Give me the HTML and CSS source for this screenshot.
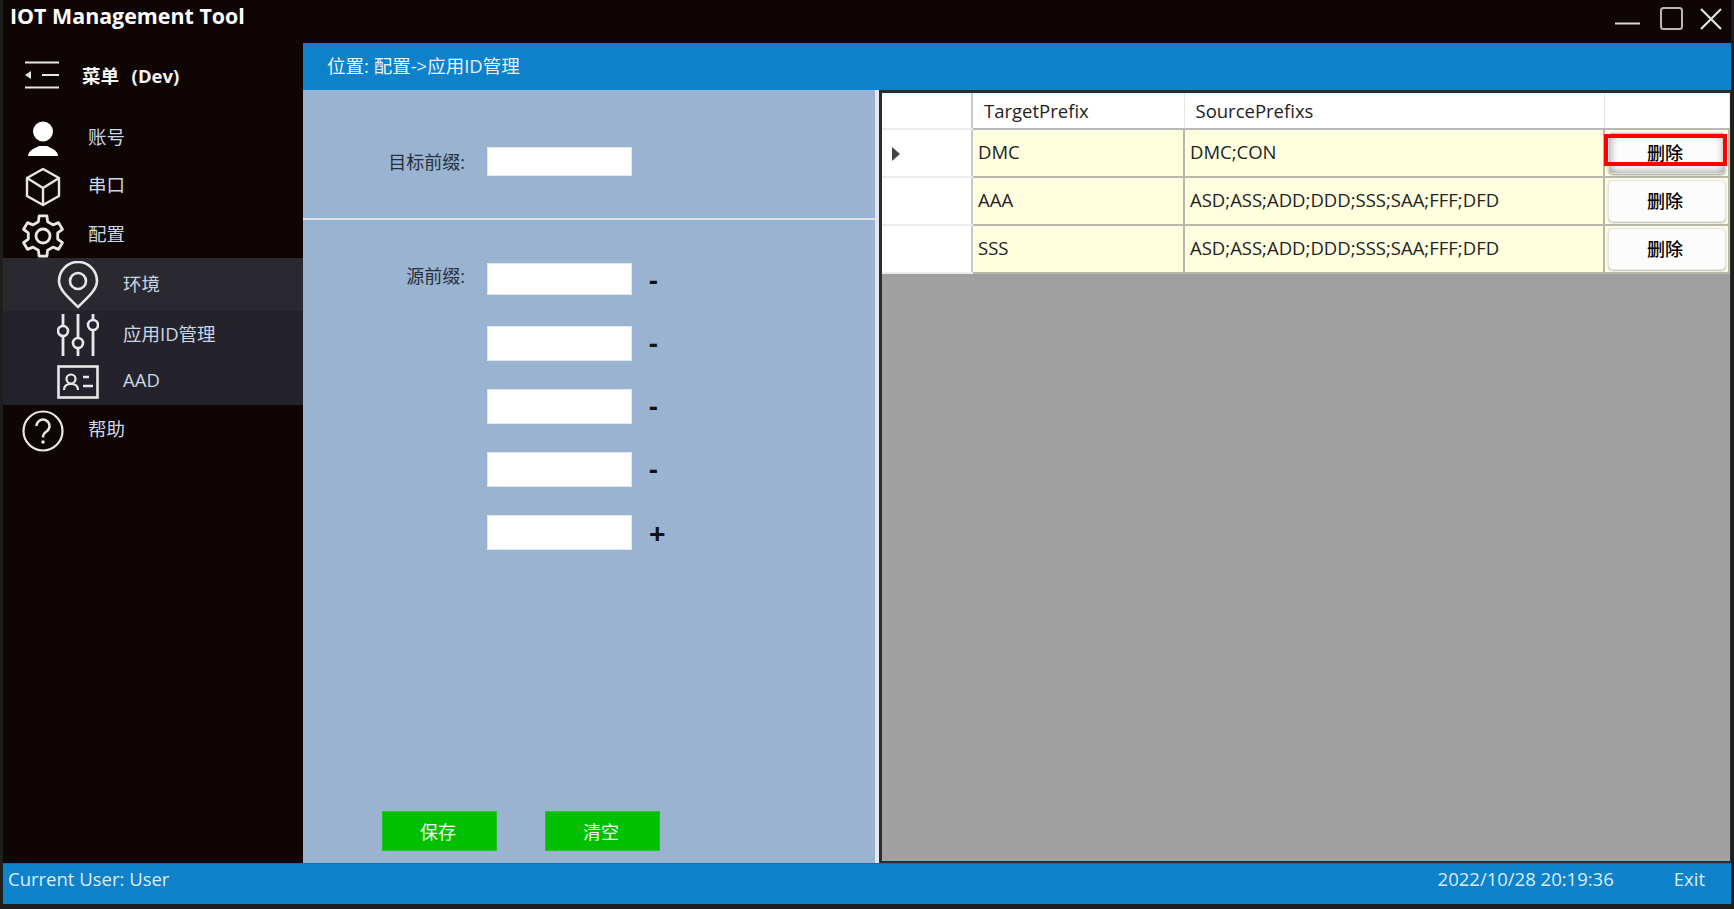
FILE: index.html

```html
<!DOCTYPE html>
<html lang="zh-CN">
<head>
    <meta charset="UTF-8">
    <title>IOT Management Tool</title>
    <link rel="stylesheet" href="styles.css">
</head>
<body>
    <div class="app">
        <div class="titlebar">
            <span class="app-title">IOT Management Tool</span>
            <div class="win-buttons">
                <svg class="win-min" width="26" height="26" viewBox="0 0 26 26"><path d="M0 17.500h25" stroke="#d8d8d8" stroke-width="2"/></svg>
                <svg width="24" height="24" viewBox="0 0 24 24"><rect x="1" y="1" width="21" height="21" rx="2.500" fill="none" stroke="#b8b8b8" stroke-width="2"/></svg>
                <svg width="22" height="22" viewBox="0 0 22 22"><path d="M1 1l20 20M21 1L1 21" stroke="#e4e4e4" stroke-width="2.200"/></svg>
            </div>
        </div>

        <div class="main">
            <div class="sidebar">
                <div class="menu-head">
                    <svg width="36" height="28" viewBox="0 0 36 28"><path d="M1 1.500h34M1 26.500h34M18 14h17" stroke="#e8e8e8" stroke-width="2"/><path d="M7 10v8l-6-4z" fill="#e8e8e8"/></svg>
                    <span>菜单&nbsp;&nbsp;(Dev)</span>
                </div>
                <div class="nav-item">
                    <div class="nav-icon">
                        <svg width="32" height="36" viewBox="0 0 32 36"><circle cx="16" cy="10.500" r="10" fill="#fff"/><path d="M1 35c0-3 2-5 5-7l6-3h8l6 3c3 2 5 4 5 7z" fill="#fff"/></svg>
                    </div>
                    <span>账号</span>
                </div>
                <div class="nav-item">
                    <div class="nav-icon">
                        <svg width="38" height="40" viewBox="0 0 38 40"><path d="M19 2l16 9v18l-16 9-16-9V11zM3 11l16 10 16-10M19 21v17" fill="none" stroke="#e8e8e8" stroke-width="2.400" stroke-linejoin="round"/></svg>
                    </div>
                    <span>串口</span>
                </div>
                <div class="nav-item nav-config">
                    <div class="nav-icon">
                        <svg width="42" height="44" viewBox="0 0 42 44"><path d="M16.400 7.700L17.100 1.900H24.900L25.600 7.700L31 10.900L36.500 8.600L40.400 15.300L35.700 18.900V25.100L40.400 28.700L36.500 35.400L31 33.100L25.600 36.300L24.900 42.100H17.100L16.400 36.300L11 33.100L5.500 35.400L1.600 28.700L6.300 25.100V18.900L1.600 15.300L5.500 8.600L11 10.900Z" fill="none" stroke="#e8e8e8" stroke-width="2.800" stroke-linejoin="round"/><circle cx="21" cy="22" r="7" fill="none" stroke="#e8e8e8" stroke-width="2.800"/></svg>
                    </div>
                    <span>配置</span>
                </div>
                <div class="sub-nav">
                    <div class="nav-item sub-item current">
                        <div class="nav-icon">
                            <svg width="42" height="48" viewBox="0 0 42 48"><path d="M21 46C12 37 2 29 2 20a19 19 0 0 1 38 0c0 9-10 17-19 26z" fill="none" stroke="#e8e8e8" stroke-width="2.600" stroke-linejoin="round"/><circle cx="21" cy="20" r="8" fill="none" stroke="#e8e8e8" stroke-width="2.600"/></svg>
                        </div>
                        <span>环境</span>
                    </div>
                    <div class="nav-item sub-item">
                        <div class="nav-icon">
                            <svg width="42" height="44" viewBox="0 0 42 44"><path d="M6 1v12M6 23v20M21 1v24M21 35v8M36 1v6M36 17v26" stroke="#e8e8e8" stroke-width="2.800"/><circle cx="6" cy="18" r="5" fill="none" stroke="#e8e8e8" stroke-width="2.600"/><circle cx="21" cy="30" r="5" fill="none" stroke="#e8e8e8" stroke-width="2.600"/><circle cx="36" cy="12" r="5" fill="none" stroke="#e8e8e8" stroke-width="2.600"/></svg>
                        </div>
                        <span>应用ID管理</span>
                    </div>
                    <div class="nav-item sub-item">
                        <div class="nav-icon">
                            <svg width="42" height="34" viewBox="0 0 42 34"><rect x="1.500" y="1.500" width="39" height="31" fill="none" stroke="#e8e8e8" stroke-width="2.600"/><circle cx="14" cy="14" r="4.500" fill="none" stroke="#e8e8e8" stroke-width="2.200"/><path d="M7 25c0-5 3-6 7-6s7 1 7 6" fill="none" stroke="#e8e8e8" stroke-width="2.200"/><path d="M26 12h6M26 21h10" stroke="#e8e8e8" stroke-width="2.400"/></svg>
                        </div>
                        <span>AAD</span>
                    </div>
                </div>
                <div class="nav-item">
                    <div class="nav-icon">
                        <svg width="42" height="42" viewBox="0 0 42 42"><circle cx="21" cy="21" r="19.500" fill="none" stroke="#e8e8e8" stroke-width="2.200"/><path d="M14.500 16a6.500 6.500 0 1 1 10 5.500c-2.500 1.500-3.500 3-3.500 6" fill="none" stroke="#e8e8e8" stroke-width="2.400"/><circle cx="21" cy="32" r="1.800" fill="#e8e8e8"/></svg>
                    </div>
                    <span>帮助</span>
                </div>
            </div>

            <div class="content">
                <div class="crumb">位置: 配置-&gt;应用ID管理</div>
                <div class="panels">
                    <div class="form-panel">
                        <div class="target-block">
                            <label>目标前缀:</label>
                            <input type="text">
                        </div>
                        <div class="source-block">
                            <div class="source-row first-row">
                                <label>源前缀:</label>
                                <input type="text">
                                <span class="row-btn">-</span>
                            </div>
                            <div class="source-row">
                                <label></label>
                                <input type="text">
                                <span class="row-btn">-</span>
                            </div>
                            <div class="source-row">
                                <label></label>
                                <input type="text">
                                <span class="row-btn">-</span>
                            </div>
                            <div class="source-row">
                                <label></label>
                                <input type="text">
                                <span class="row-btn">-</span>
                            </div>
                            <div class="source-row">
                                <label></label>
                                <input type="text">
                                <span class="row-btn plus">+</span>
                            </div>
                        </div>
                        <div class="form-actions">
                            <button class="green-btn">保存</button>
                            <button class="green-btn">清空</button>
                        </div>
                    </div>
                    <div class="grid-panel">
                        <table class="grid">
                            <colgroup>
                                <col class="col-head">
                                <col class="col-target">
                                <col class="col-source">
                                <col class="col-action">
                            </colgroup>
                            <thead>
                                <tr>
                                    <th class="row-head"></th>
                                    <th>TargetPrefix</th>
                                    <th>SourcePrefixs</th>
                                    <th></th>
                                </tr>
                            </thead>
                            <tbody>
                                <tr>
                                    <td class="row-head"><span class="row-arrow"></span></td>
                                    <td>DMC</td>
                                    <td>DMC;CON</td>
                                    <td class="action-cell">
                                        <button class="del-btn pressed">删除</button>
                                        <div class="red-frame"></div>
                                    </td>
                                </tr>
                                <tr>
                                    <td class="row-head"></td>
                                    <td>AAA</td>
                                    <td>ASD;ASS;ADD;DDD;SSS;SAA;FFF;DFD</td>
                                    <td class="action-cell"><button class="del-btn">删除</button></td>
                                </tr>
                                <tr>
                                    <td class="row-head"></td>
                                    <td>SSS</td>
                                    <td>ASD;ASS;ADD;DDD;SSS;SAA;FFF;DFD</td>
                                    <td class="action-cell"><button class="del-btn">删除</button></td>
                                </tr>
                            </tbody>
                        </table>
                    </div>
                </div>
            </div>
        </div>

        <div class="statusbar">
            <span class="status-user">Current User: User</span>
            <span class="status-time">2022/10/28 20:19:36</span>
            <span class="status-exit">Exit</span>
        </div>
    </div>
</body>
</html>
```

FILE: styles.css

```css
* {
    box-sizing: border-box;
}

body {
    margin: 0;
    background-color: #1e1e1e;
    font-family: "Open Sans", "Noto Sans CJK SC", sans-serif;
    font-size: 18.5px;
    overflow: hidden;
}

.app {
    width: 1728px;
    height: 904px;
    margin-left: 3px;
    background-color: #0f0505;
    display: flex;
    flex-direction: column;
}

/* top bar */
.titlebar {
    height: 43px;
    display: flex;
    align-items: center;
    justify-content: space-between;
    flex-shrink: 0;
}

.app-title {
    margin-left: 7px;
    margin-top: -12px;
    color: #fff;
    font-size: 21.4px;
    font-weight: 700;
}

.win-buttons {
    display: flex;
    align-items: center;
    gap: 16px;
    margin-right: 9px;
    margin-top: -5px;
}

.win-min {
    margin-right: 3px;
}

.main {
    display: flex;
    height: 820px;
}

/* left menu */
.sidebar {
    width: 300px;
    flex-shrink: 0;
    color: #ccd6e6;
}

.menu-head {
    height: 70px;
    padding: 0 0 7px 21px;
    display: flex;
    align-items: center;
    gap: 22px;
    color: #f4f4f4;
    font-size: 18.5px;
    font-weight: 700;
    word-spacing: 1.5px;
}

.nav-item {
    height: 48px;
    display: flex;
    align-items: center;
}

.nav-item span {
    padding-bottom: 2px;
}

.nav-config {
    height: 49px;
}

.nav-icon {
    width: 85px;
    padding-left: 17px;
    padding-right: 23px;
    margin-top: 4px;
    display: flex;
    align-items: center;
    justify-content: center;
    flex-shrink: 0;
}

.sub-nav {
    background-color: #24232b;
}

.sub-item {
    height: 47px;
    padding-left: 35px;
}

.sub-item span {
    padding-bottom: 4px;
}

.sub-item .nav-icon {
    margin-top: 1px;
}

.current {
    height: 53px;
    background-color: #2a2930;
}

/* breadcrumb */
.content {
    flex: 1;
    min-width: 0;
    display: flex;
    flex-direction: column;
}

.crumb {
    height: 47px;
    padding-left: 24px;
    line-height: 45px;
    background-color: #0e81cb;
    color: #e8f2fa;
}

.panels {
    flex: 1;
    display: flex;
    min-height: 0;
}

/* form on the left */
.form-panel {
    width: 572px;
    background-color: #9ab3d1;
    display: flex;
    flex-direction: column;
    color: #26303c;
}

.form-panel label {
    width: 162px;
    text-align: right;
    font-size: 18px;
    flex-shrink: 0;
}

.form-panel input {
    width: 145px;
    margin-left: 22px;
    border: 1px solid #dfe8f2;
    background-color: #fff;
    flex-shrink: 0;
}

.target-block {
    height: 130px;
    padding-top: 57px;
    display: flex;
    align-items: flex-start;
    border-bottom: 2px solid #dde4ec;
}

.target-block label {
    margin-top: 1px;
}

.target-block input {
    height: 29px;
}

.source-block {
    flex: 1;
    padding-top: 43px;
    display: flex;
    flex-direction: column;
    gap: 28px;
}

.source-row {
    display: flex;
    align-items: flex-start;
    height: 35px;
}

.source-row label {
    margin-top: -1px;
}

.source-row input {
    height: 35px;
}

.first-row input {
    height: 32px;
}

.row-btn {
    margin-left: 17px;
    color: #111;
    font-size: 27px;
    font-weight: 700;
    line-height: 33px;
}

.plus {
    font-size: 29px;
    line-height: 36px;
}

.form-actions {
    display: flex;
    gap: 48px;
    padding: 0 0 12px 79px;
}

.green-btn {
    width: 115px;
    height: 40px;
    padding: 0 3px 0 0;
    border: 1px solid #28c028;
    background-color: #00c000;
    color: #f2fff2;
    font-family: inherit;
    font-size: 18px;
}

/* table on the right */
.grid-panel {
    flex: 1;
    min-width: 0;
    margin-left: 4px;
    border: 3px solid #2c2c2c;
    border-right: 1px solid #2c2c2c;
    border-bottom: 2px solid #2c2c2c;
    background-color: #a0a0a0;
    box-shadow: -4px 0 0 #e4e8ee;
}

.grid {
    border-collapse: collapse;
    table-layout: fixed;
    width: 100%;
}

.col-head {
    width: 90px;
}

.col-target {
    width: 212px;
}

.col-source {
    width: 420px;
}

.grid th {
    height: 36px;
    padding: 0 0 0 11px;
    text-align: left;
    font-weight: 400;
    background-color: #fff;
    color: #222;
    border-right: 1px solid #e4e4e4;
    border-bottom: 2px solid #b8b8b8;
}

.grid td {
    height: 48px;
    padding: 0 0 4px 5px;
    background-color: #ffffe0;
    color: #222;
    border: 2px solid #b8b8a8;
    border-top: none;
    border-left: none;
}

.grid .row-head {
    background-color: #fff;
    border-right: 2px solid #c8c8c8;
    border-bottom: 2px solid #ececec;
}

.grid td.row-head {
    padding: 2px 0 0 10px;
}

.row-arrow {
    display: block;
    width: 0;
    height: 0;
    border-left: 8px solid #444;
    border-top: 7px solid transparent;
    border-bottom: 7px solid transparent;
}

.action-cell {
    position: relative;
    text-align: center;
}

.grid .action-cell {
    padding: 0 0 0 3px;
}

.del-btn {
    display: block;
    width: 118px;
    height: 42px;
    padding: 0 4px 2px 0;
    border: 1px solid #e4e4e4;
    border-radius: 5px;
    background-color: #fcfcfc;
    box-shadow: 0 1px 2px #bbb;
    color: #000;
    font-family: inherit;
    font-size: 18px;
    font-weight: 500;
}

.pressed {
    box-shadow: inset 0 0 10px #888, 0 1px 2px #999;
}

.red-frame {
    position: absolute;
    left: -1px;
    top: 4px;
    width: 123px;
    height: 32px;
    border: 4px solid #f00;
}

/* bottom bar */
.statusbar {
    height: 41px;
    padding: 0 0 12px 5px;
    background-color: #0e81cb;
    display: flex;
    align-items: center;
    color: #dcecf8;
    border-top: 1px solid #0c6fb0;
}

.status-user {
    flex: 1;
}

.status-exit {
    margin-left: 60px;
    margin-right: 26px;
}
```
